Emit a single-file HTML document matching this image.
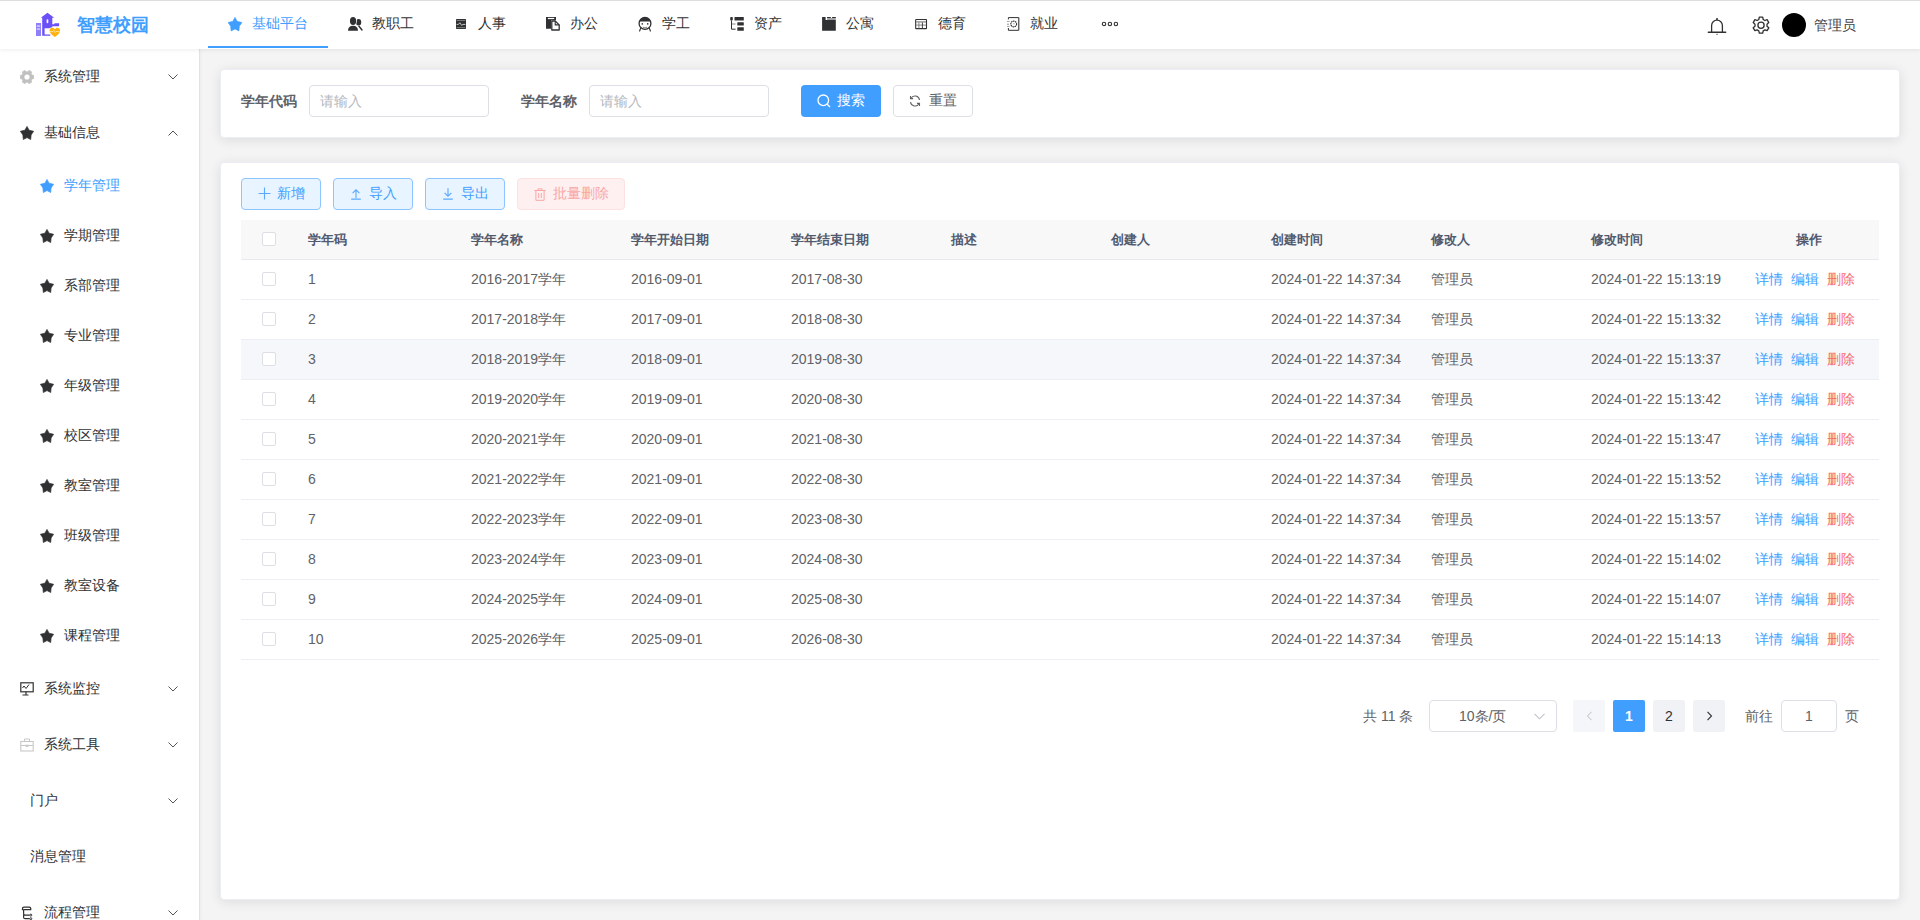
<!DOCTYPE html>
<html><head><meta charset="utf-8">
<style>
*{box-sizing:border-box;margin:0;padding:0}
html,body{width:1920px;height:920px;overflow:hidden}
body{font-family:"Liberation Sans",sans-serif;font-size:14px;color:#606266;background:#f4f4f4;position:relative}
.abs{position:absolute}
/* header */
#hdr{position:absolute;left:0;top:0;width:1920px;height:49px;background:#fff;border-top:1px solid #dcdedb;box-shadow:0 1px 4px rgba(0,21,41,.08);z-index:5}
.logo-t{position:absolute;left:77px;top:13px;font-size:18px;font-weight:bold;color:#409eff;letter-spacing:0px;line-height:22px}
.nav{position:absolute;left:208px;top:-1px;height:48px;display:flex}
.nav .it{height:48px;padding:0 20px;display:flex;align-items:center;color:#303133;font-size:14px;position:relative}
.nav .it svg{width:16px;height:16px;margin-right:8px;flex:none}
.nav .it.on{color:#409eff}
.nav .it.on:after{content:"";position:absolute;left:0;right:0;bottom:0;height:2px;background:#409eff}
/* sidebar */
#side{position:absolute;left:0;top:49px;width:200px;height:871px;background:#fff;border-right:1px solid #dfe2e8;box-shadow:1px 0 3px rgba(0,0,0,.04)}
.mi{position:absolute;left:0;width:199px;height:56px;display:flex;align-items:center;color:#303133;font-size:14px}
.mi svg.ic{position:absolute;left:20px;width:14px;height:14px}
.mi .tx{position:absolute;left:44px}
.mi svg.ch{position:absolute;left:168px;width:10px;height:6px}
.sm{position:absolute;left:0;width:199px;height:50px;display:flex;align-items:center;color:#303133}
.sm svg{position:absolute;left:40px;width:14px;height:14px}
.sm .tx{position:absolute;left:64px}
/* cards */
.card{position:absolute;left:220px;width:1680px;background:#fff;border:1px solid #ebeef5;border-radius:4px;box-shadow:0 2px 12px 0 rgba(0,0,0,.1)}
.lbl{position:absolute;top:92px;font-weight:bold;color:#606266;font-size:14px;line-height:18px}
.inp{position:absolute;top:85px;width:180px;height:32px;border:1px solid #dcdfe6;border-radius:4px;background:#fff;color:#b4b7be;padding-left:10px;line-height:30px;font-size:14px}
.btn{position:absolute;height:32px;border-radius:4px;display:flex;align-items:center;justify-content:center;font-size:14px}

.tb{position:absolute;left:241px;width:1638px}
.th{position:absolute;top:220px;left:241px;width:1638px;height:40px;background:#f8f8f9;border-bottom:1px solid #e6eaf0}
.tr{position:absolute;left:241px;width:1638px;height:40px;border-bottom:1px solid #ebeef5;background:#fff}
.tr.hv{background:#f5f7fa}
.c{position:absolute;top:0;height:39px;line-height:39px;white-space:nowrap}
.th .c{font-weight:bold;color:#515a6e;font-size:13px}
.tr .c{color:#606266;font-size:14px}
.cb{position:absolute;left:21px;top:12px;width:14px;height:14px;border:1px solid #dcdfe6;border-radius:2px;background:#fff}
.op{color:#409eff}
.op.d{color:#f56c6c}
.pb{position:absolute;top:700px;width:32px;height:32px;border-radius:2px;background:#f0f2f5;color:#303133;text-align:center;line-height:32px;font-size:14px}
</style></head>
<body>
<div id="hdr">
  <svg class="abs" style="left:30px;top:5px" width="40" height="40" viewBox="0 0 40 40">
    <rect x="6" y="17" width="5" height="13" fill="#8e80f8"/>
    <rect x="6.8" y="19.6" width="3.4" height=".9" fill="#fff"/><rect x="6.8" y="22.6" width="3.4" height=".9" fill="#fff"/>
    <path d="M10.8 11.8 L17.5 6.8 L24.2 11.8 L22.3 11.8 L22.3 18.3 L24.4 18.3 L24.4 17.3 L29.1 17.3 L29.1 20.3 L22.3 20.3 L22.3 22.3 L14.6 22.3 L14.6 28.4 L20.3 28.4 L20.3 29.8 L12.2 29.8 L12.2 11.8 Z" fill="#6a50f6"/>
    <rect x="16.6" y="13.2" width="1.7" height="4.1" rx=".8" fill="#fff"/>
    <path d="M24.85 31.6 C21.6 29 19.1 27.1 19.1 24.3 C19.1 22.4 20.5 21.2 22.3 21.2 C23.4 21.2 24.3 21.8 24.85 22.6 C25.4 21.8 26.3 21.2 27.4 21.2 C29.2 21.2 30.6 22.4 30.6 24.3 C30.6 27.1 28.1 29 24.85 31.6Z" fill="#fff"/>
    <path d="M24.85 31.1 C22 28.8 19.6 27 19.6 24.4 C19.6 22.8 20.8 21.7 22.3 21.7 C23.4 21.7 24.3 22.3 24.85 23.2 C25.4 22.3 26.3 21.7 27.4 21.7 C28.9 21.7 30.1 22.8 30.1 24.4 C30.1 27 27.7 28.8 24.85 31.1Z" fill="#ffb20a"/>
    <path d="M20 25.6 H23 L23.8 24.4 L25 26.6 L25.8 25.6 H29.6" fill="none" stroke="#fff" stroke-width=".55"/>
  </svg>
  <div class="logo-t">智慧校园</div>
  <div class="nav">
    <div class="it on"><svg viewBox="0 0 16 16"><path d="M7 1.4 L9.2 5.4 L13.9 6.5 L11.3 10.2 L10.9 14.9 L7 12.9 L3.1 14.9 L2.7 10.2 L.1 6.5 L4.8 5.4Z" fill="#409eff" stroke="#409eff" stroke-width=".7" stroke-linejoin="round"/></svg>基础平台</div>
    <div class="it"><svg viewBox="0 0 16 16"><ellipse cx="10.6" cy="6.2" rx="2.6" ry="3.2" fill="#303133"/><path d="M11 10.2 L14 14" stroke="#303133" stroke-width="1.4" stroke-linecap="round"/><ellipse cx="5.05" cy="5" rx="3.9" ry="4.8" fill="#fff"/><path d="M-1 15.8 C-1 11 2 8.8 5 8.8 C8 8.8 11 11 11 15.8Z" fill="#fff"/><ellipse cx="5.05" cy="5" rx="3.1" ry="4" fill="#303133"/><path d="M0 14.7 C0 11.5 2 9.8 5 9.8 C8 9.8 10 11.5 10 14.7 Z" fill="#303133"/></svg>教职工</div>
    <div class="it"><svg viewBox="0 0 16 16"><rect x="2" y="2.9" width="10" height="10" rx=".6" fill="#303133"/><path d="M2.6 4.5h8.8M2.6 11.6h8.8" stroke="#9a9a9a" stroke-width=".7"/><path d="M2.6 8.4h1.8l1.5-1.6 1.8 2.6 1.2-1h2.5" stroke="#d8d8d8" stroke-width=".9" fill="none"/></svg>人事</div>
    <div class="it"><svg viewBox="0 0 16 16"><path d="M0 1 H10 V4.3 H5.1 V12.8 H0Z" fill="#303133"/><rect x="1.9" y="1.9" width="6.3" height="1.2" fill="#fff"/><path d="M5.8 5 H9.2 L13.2 8.9 V14 H5.8Z" fill="#fff" stroke="#303133" stroke-width="1.3" stroke-linejoin="round"/><path d="M9.2 5 V8.9 H13.2" fill="none" stroke="#303133" stroke-width="1.1"/></svg>办公</div>
    <div class="it"><svg viewBox="0 -.6 16 16"><circle cx="7" cy="6.8" r="5.9" fill="none" stroke="#303133" stroke-width="1.3"/><path d="M1.4 4.8 C2.4 2 4.5 .9 7 .9 S11.6 2 12.6 4.8Z" fill="#303133"/><circle cx="4.3" cy="7.3" r=".8" fill="#303133"/><circle cx="9.7" cy="7.3" r=".8" fill="#303133"/><path d="M4.8 9.8 C6 10.8 8 10.8 9.2 9.8 L8.6 12 H5.4Z" fill="#8a8a8a"/><path d="M2.6 11.8 L1.6 14.4 M11.4 11.8 L12.4 14.4" stroke="#303133" stroke-width="1.2" stroke-linecap="round"/></svg>学工</div>
    <div class="it"><svg viewBox="0 0 16 16"><rect x=".2" y="1" width="2.6" height="3.5" rx=".8" fill="#303133"/><path d="M1.5 4.5 V13.2 H5.6" fill="none" stroke="#303133" stroke-width="1"/><path d="M2 8 H5.6" stroke="#888" stroke-width="1"/><rect x="4.5" y="1" width="9.3" height="3.5" rx=".5" fill="#303133"/><rect x="7.3" y="6.3" width="6.5" height="3.2" rx=".5" fill="#303133"/><rect x="7.3" y="11.3" width="6.5" height="3.4" rx=".5" fill="#303133"/></svg>资产</div>
    <div class="it"><svg viewBox="0 0 16 16"><path d="M.1 1 H3.6 V4.1 H13.8 V14.7 H.1Z" fill="#303133"/><rect x="5.1" y="1" width="3.7" height="1" fill="#303133"/><rect x="10.1" y="1" width="3.7" height="1" fill="#303133"/><rect x="5.1" y="2" width="8.7" height="2.1" fill="#303133" opacity=".45"/></svg>公寓</div>
    <div class="it"><svg viewBox="0 0 16 16"><rect x="1.7" y="3.5" width="10.8" height="9.1" rx=".4" fill="none" stroke="#303133" stroke-width="1.1"/><path d="M2.2 5.9 H12" stroke="#888" stroke-width="1.3"/><path d="M2.2 9.1 H12 M4.9 6.5 V12.2" stroke="#777" stroke-width=".9"/><path d="M8.4 6.5 V12.2" stroke="#303133" stroke-width=".9"/></svg>德育</div>
    <div class="it"><svg viewBox="0 0 16 16"><path d="M2.4 3.4 V1.6 H12.7 V14.3 H2.4 V12" fill="none" stroke="#303133" stroke-width="1"/><path d="M12.7 1.6 V14.3" stroke="#666" stroke-width="1.1"/><path d="M1 5.4 H3.6 M1 10.4 H3.6" stroke="#888" stroke-width=".8"/><rect x="1.2" y="7.6" width="1.6" height="1.3" fill="#999"/><circle cx="7.7" cy="8" r="2.9" fill="none" stroke="#303133" stroke-width="1.1" stroke-dasharray="1.6 .5"/><path d="M7.5 6.8 L8.8 8 L7.5 8.6Z" fill="#888"/></svg>就业</div>
    <div class="it"><svg viewBox="0 0 24 16" style="margin:0;width:24px"><circle cx="6" cy="8" r="1.7" fill="none" stroke="#303133" stroke-width="1.1"/><circle cx="11.9" cy="8" r="1.7" fill="none" stroke="#303133" stroke-width="1.1"/><circle cx="17.9" cy="8" r="1.7" fill="none" stroke="#303133" stroke-width="1.1"/></svg></div>
  </div>
  <svg class="abs" style="left:1707px;top:15px" width="20" height="20" viewBox="0 0 20 20"><path d="M4.6 16.2V9.6a5.4 5.4 0 0 1 10.8 0v6.6" fill="none" stroke="#303133" stroke-width="1.3"/><path d="M1.3 16.3h17.4" stroke="#303133" stroke-width="1.4" stroke-linecap="round"/><circle cx="10" cy="2.9" r="1" fill="#303133"/><path d="M9.2 18.3h1.6" stroke="#888" stroke-width="1.2"/></svg>
  <svg class="abs" style="left:1751px;top:14px" width="20" height="20" viewBox="0 0 20 20"><path d="M8.3 2.2h3.4l.5 2.3 1.7 1 2.2-.8 1.7 2.9-1.8 1.6v2l1.8 1.6-1.7 2.9-2.2-.8-1.7 1-.5 2.3H8.3l-.5-2.3-1.7-1-2.2.8-1.7-2.9 1.8-1.6V9.2L2.2 7.6l1.7-2.9 2.2.8 1.7-1z" fill="none" stroke="#303133" stroke-width="1.3" stroke-linejoin="round"/><circle cx="10" cy="10.2" r="3.1" fill="none" stroke="#303133" stroke-width="1.3"/></svg>
  <div class="abs" style="left:1782px;top:12px;width:24px;height:24px;border-radius:50%;background:#000"></div>
  <div class="abs" style="left:1814px;top:16px;font-size:14px;color:#444;line-height:16px">管理员</div>
</div>

<div id="side">
<div class="mi" style="top:0"><svg class="ic" viewBox="0 0 14 14"><path d="M12.01 4.98 L13.82 5.43 L13.82 8.57 L12.01 9.02 L11.26 10.32 L11.77 12.12 L9.05 13.69 L7.75 12.35 L6.25 12.35 L4.95 13.69 L2.23 12.12 L2.74 10.32 L1.99 9.02 L0.18 8.57 L0.18 5.43 L1.99 4.98 L2.74 3.68 L2.23 1.88 L4.95 0.31 L6.25 1.65 L7.75 1.65 L9.05 0.31 L11.77 1.88 L11.26 3.68Z" fill="#c0c0c0" stroke="#c0c0c0" stroke-width=".6" stroke-linejoin="round"/><circle cx="7" cy="7" r="2.6" fill="#fff"/></svg><span class="tx">系统管理</span><svg class="ch" viewBox="0 0 10 6"><path d="M.5 .5L5 5 9.5 .5" fill="none" stroke="#505256" stroke-width="1"/></svg></div>
<div class="mi" style="top:56px"><svg class="ic" viewBox="0 0 14 14"><path d="M7 0.4 L9.1 4.2 L13.6 5.3 L11.1 8.9 L10.7 13.5 L7 11.6 L3.3 13.5 L2.9 8.9 L0.4 5.3 L4.9 4.2Z" fill="#303133" stroke="#303133" stroke-width=".7" stroke-linejoin="round"/></svg><span class="tx">基础信息</span><svg class="ch" viewBox="0 0 10 6"><path d="M.5 5.5L5 1 9.5 5.5" fill="none" stroke="#505256" stroke-width="1"/></svg></div>
<div class="sm" style="top:112px;color:#409eff"><svg  viewBox="0 0 14 14"><path d="M7 0.4 L9.1 4.2 L13.6 5.3 L11.1 8.9 L10.7 13.5 L7 11.6 L3.3 13.5 L2.9 8.9 L0.4 5.3 L4.9 4.2Z" fill="#409eff" stroke="#409eff" stroke-width=".7" stroke-linejoin="round"/></svg><span class="tx">学年管理</span></div>
<div class="sm" style="top:162px;color:#303133"><svg  viewBox="0 0 14 14"><path d="M7 0.4 L9.1 4.2 L13.6 5.3 L11.1 8.9 L10.7 13.5 L7 11.6 L3.3 13.5 L2.9 8.9 L0.4 5.3 L4.9 4.2Z" fill="#303133" stroke="#303133" stroke-width=".7" stroke-linejoin="round"/></svg><span class="tx">学期管理</span></div>
<div class="sm" style="top:212px;color:#303133"><svg  viewBox="0 0 14 14"><path d="M7 0.4 L9.1 4.2 L13.6 5.3 L11.1 8.9 L10.7 13.5 L7 11.6 L3.3 13.5 L2.9 8.9 L0.4 5.3 L4.9 4.2Z" fill="#303133" stroke="#303133" stroke-width=".7" stroke-linejoin="round"/></svg><span class="tx">系部管理</span></div>
<div class="sm" style="top:262px;color:#303133"><svg  viewBox="0 0 14 14"><path d="M7 0.4 L9.1 4.2 L13.6 5.3 L11.1 8.9 L10.7 13.5 L7 11.6 L3.3 13.5 L2.9 8.9 L0.4 5.3 L4.9 4.2Z" fill="#303133" stroke="#303133" stroke-width=".7" stroke-linejoin="round"/></svg><span class="tx">专业管理</span></div>
<div class="sm" style="top:312px;color:#303133"><svg  viewBox="0 0 14 14"><path d="M7 0.4 L9.1 4.2 L13.6 5.3 L11.1 8.9 L10.7 13.5 L7 11.6 L3.3 13.5 L2.9 8.9 L0.4 5.3 L4.9 4.2Z" fill="#303133" stroke="#303133" stroke-width=".7" stroke-linejoin="round"/></svg><span class="tx">年级管理</span></div>
<div class="sm" style="top:362px;color:#303133"><svg  viewBox="0 0 14 14"><path d="M7 0.4 L9.1 4.2 L13.6 5.3 L11.1 8.9 L10.7 13.5 L7 11.6 L3.3 13.5 L2.9 8.9 L0.4 5.3 L4.9 4.2Z" fill="#303133" stroke="#303133" stroke-width=".7" stroke-linejoin="round"/></svg><span class="tx">校区管理</span></div>
<div class="sm" style="top:412px;color:#303133"><svg  viewBox="0 0 14 14"><path d="M7 0.4 L9.1 4.2 L13.6 5.3 L11.1 8.9 L10.7 13.5 L7 11.6 L3.3 13.5 L2.9 8.9 L0.4 5.3 L4.9 4.2Z" fill="#303133" stroke="#303133" stroke-width=".7" stroke-linejoin="round"/></svg><span class="tx">教室管理</span></div>
<div class="sm" style="top:462px;color:#303133"><svg  viewBox="0 0 14 14"><path d="M7 0.4 L9.1 4.2 L13.6 5.3 L11.1 8.9 L10.7 13.5 L7 11.6 L3.3 13.5 L2.9 8.9 L0.4 5.3 L4.9 4.2Z" fill="#303133" stroke="#303133" stroke-width=".7" stroke-linejoin="round"/></svg><span class="tx">班级管理</span></div>
<div class="sm" style="top:512px;color:#303133"><svg  viewBox="0 0 14 14"><path d="M7 0.4 L9.1 4.2 L13.6 5.3 L11.1 8.9 L10.7 13.5 L7 11.6 L3.3 13.5 L2.9 8.9 L0.4 5.3 L4.9 4.2Z" fill="#303133" stroke="#303133" stroke-width=".7" stroke-linejoin="round"/></svg><span class="tx">教室设备</span></div>
<div class="sm" style="top:562px;color:#303133"><svg  viewBox="0 0 14 14"><path d="M7 0.4 L9.1 4.2 L13.6 5.3 L11.1 8.9 L10.7 13.5 L7 11.6 L3.3 13.5 L2.9 8.9 L0.4 5.3 L4.9 4.2Z" fill="#303133" stroke="#303133" stroke-width=".7" stroke-linejoin="round"/></svg><span class="tx">课程管理</span></div>
<div class="mi" style="top:612px"><svg class="ic" viewBox="0 0 14 14"><rect x=".8" y=".8" width="12.4" height="9" fill="none" stroke="#303133" stroke-width="1.2"/><path d="M2.5 6l1.5-2 2 2.5 3-4" fill="none" stroke="#303133" stroke-width="1"/><path d="M6 9.8v3M2.5 13h6" stroke="#303133" stroke-width="1.2"/></svg><span class="tx">系统监控</span><svg class="ch" viewBox="0 0 10 6"><path d="M.5 .5L5 5 9.5 .5" fill="none" stroke="#505256" stroke-width="1"/></svg></div>
<div class="mi" style="top:668px"><svg class="ic" viewBox="0 0 14 14"><rect x=".8" y="3.5" width="12.4" height="9.5" fill="none" stroke="#c8c8c8" stroke-width="1.1"/><path d="M4.5 3.5V1h5v2.5M.8 7.5h12.4M6 6.5v2h2v-2" fill="none" stroke="#c8c8c8" stroke-width="1"/></svg><span class="tx">系统工具</span><svg class="ch" viewBox="0 0 10 6"><path d="M.5 .5L5 5 9.5 .5" fill="none" stroke="#505256" stroke-width="1"/></svg></div>
<div class="mi" style="top:724px"><span class="tx" style="left:30px">门户</span><svg class="ch" viewBox="0 0 10 6"><path d="M.5 .5L5 5 9.5 .5" fill="none" stroke="#505256" stroke-width="1"/></svg></div>
<div class="mi" style="top:780px"><span class="tx" style="left:30px">消息管理</span></div>
<div class="mi" style="top:836px"><svg class="ic" viewBox="0 0 14 14" style="left:21px"><path d="M1.5 4.2 V2.6 C1.5 1.7 2.1 1.1 3 1.1 H8.2 C9.1 1.1 9.7 1.7 9.7 2.6 V3.6 H2.3" fill="none" stroke="#303133" stroke-width="1.3"/><path d="M2.6 4 V7.6 C2.6 8.5 3.2 9.1 4.1 9.1 H8.6 M2.6 8.6 V11.2 C2.6 12.1 3.2 12.7 4.1 12.7 H8.6" fill="none" stroke="#303133" stroke-width="1.2"/><circle cx="9.8" cy="9.1" r="1" fill="none" stroke="#303133" stroke-width="1"/><circle cx="9.8" cy="12.7" r="1" fill="none" stroke="#303133" stroke-width="1"/></svg><span class="tx">流程管理</span><svg class="ch" viewBox="0 0 10 6"><path d="M.5 .5L5 5 9.5 .5" fill="none" stroke="#505256" stroke-width="1"/></svg></div>
</div>
<div class="card" style="top:69px;height:69px"></div>
<div class="lbl" style="left:241px">学年代码</div>
<div class="inp" style="left:309px">请输入</div>
<div class="lbl" style="left:521px">学年名称</div>
<div class="inp" style="left:589px">请输入</div>
<div class="btn" style="left:801px;top:85px;width:80px;background:#409eff;color:#fff"><svg width="14" height="14" viewBox="0 0 14 14" style="margin-right:6px"><circle cx="6.3" cy="6.3" r="5.3" fill="none" stroke="#fff" stroke-width="1.3"/><path d="M10.2 10.2L13 13" stroke="#fff" stroke-width="1.3"/></svg>搜索</div>
<div class="btn" style="left:893px;top:85px;width:80px;background:#fff;border:1px solid #dcdfe6;color:#606266"><svg width="12" height="12" viewBox="0 0 12 12" style="margin-right:8px"><path d="M10.5 5A4.6 4.6 0 0 0 2 3.2M1.5 7A4.6 4.6 0 0 0 10 8.8" fill="none" stroke="#606266" stroke-width="1.1"/><path d="M1.5 1v2.6h2.6M10.5 11V8.4H7.9" fill="none" stroke="#606266" stroke-width="1.1"/></svg>重置</div>
<div class="card" style="top:162px;height:738px"></div>
<div class="btn" style="left:241px;top:178px;width:80px;background:#e8f4ff;border:1px solid #8cc5ff;color:#409eff"><svg width="13" height="13" viewBox="0 0 13 13" style="margin-right:6px;position:relative;top:-.5px"><path d="M6.5 .6v11.8M.6 6.5h11.8" stroke="#5aa9ff" stroke-width="1.1"/></svg>新增</div>
<div class="btn" style="left:333px;top:178px;width:80px;background:#e8f4ff;border:1px solid #8cc5ff;color:#409eff"><svg width="12" height="13" viewBox="0 0 12 13" style="margin-right:7px;position:relative;top:-1px"><path d="M6 11V3M2.6 6.2L6 2.8l3.4 3.4M1.2 12.1h9.6" fill="none" stroke="#5aa9ff" stroke-width="1.1"/></svg>导入</div>
<div class="btn" style="left:425px;top:178px;width:80px;background:#e8f4ff;border:1px solid #8cc5ff;color:#409eff"><svg width="12" height="13" viewBox="0 0 12 13" style="margin-right:7px;position:relative;top:-1px"><path d="M6 1.2v8M2.6 5.8L6 9.2l3.4-3.4M1.2 12.1h9.6" fill="none" stroke="#5aa9ff" stroke-width="1.1"/></svg>导出</div>
<div class="btn" style="left:517px;top:178px;width:108px;background:#fef0f0;border:1px solid #fde2e2;color:#f9a7a7"><svg width="12" height="13" viewBox="0 0 12 13" style="margin-right:7px"><path d="M.3 2.5h11.4M4 2.5V.8h4v1.7M1.9 2.5v9.8h8.2V2.5M4.7 5v5M7.3 5v5" fill="none" stroke="#f9a7a7" stroke-width="1"/></svg>批量删除</div>
<div class="th"><div class="cb"></div><div class="c" style="left:67px">学年码</div><div class="c" style="left:230px">学年名称</div><div class="c" style="left:390px">学年开始日期</div><div class="c" style="left:550px">学年结束日期</div><div class="c" style="left:710px">描述</div><div class="c" style="left:870px">创建人</div><div class="c" style="left:1030px">创建时间</div><div class="c" style="left:1190px">修改人</div><div class="c" style="left:1350px">修改时间</div><div class="c" style="left:1555px">操作</div></div>
<div class="tr" style="top:260px"><div class="cb"></div><div class="c" style="left:67px">1</div><div class="c" style="left:230px">2016-2017学年</div><div class="c" style="left:390px">2016-09-01</div><div class="c" style="left:550px">2017-08-30</div><div class="c" style="left:1030px">2024-01-22 14:37:34</div><div class="c" style="left:1190px">管理员</div><div class="c" style="left:1350px">2024-01-22 15:13:19</div><div class="c" style="left:1514px"><span class="op">详情</span>&nbsp;&nbsp;<span class="op">编辑</span>&nbsp;&nbsp;<span class="op d">删除</span></div></div>
<div class="tr" style="top:300px"><div class="cb"></div><div class="c" style="left:67px">2</div><div class="c" style="left:230px">2017-2018学年</div><div class="c" style="left:390px">2017-09-01</div><div class="c" style="left:550px">2018-08-30</div><div class="c" style="left:1030px">2024-01-22 14:37:34</div><div class="c" style="left:1190px">管理员</div><div class="c" style="left:1350px">2024-01-22 15:13:32</div><div class="c" style="left:1514px"><span class="op">详情</span>&nbsp;&nbsp;<span class="op">编辑</span>&nbsp;&nbsp;<span class="op d">删除</span></div></div>
<div class="tr hv" style="top:340px"><div class="cb"></div><div class="c" style="left:67px">3</div><div class="c" style="left:230px">2018-2019学年</div><div class="c" style="left:390px">2018-09-01</div><div class="c" style="left:550px">2019-08-30</div><div class="c" style="left:1030px">2024-01-22 14:37:34</div><div class="c" style="left:1190px">管理员</div><div class="c" style="left:1350px">2024-01-22 15:13:37</div><div class="c" style="left:1514px"><span class="op">详情</span>&nbsp;&nbsp;<span class="op">编辑</span>&nbsp;&nbsp;<span class="op d">删除</span></div></div>
<div class="tr" style="top:380px"><div class="cb"></div><div class="c" style="left:67px">4</div><div class="c" style="left:230px">2019-2020学年</div><div class="c" style="left:390px">2019-09-01</div><div class="c" style="left:550px">2020-08-30</div><div class="c" style="left:1030px">2024-01-22 14:37:34</div><div class="c" style="left:1190px">管理员</div><div class="c" style="left:1350px">2024-01-22 15:13:42</div><div class="c" style="left:1514px"><span class="op">详情</span>&nbsp;&nbsp;<span class="op">编辑</span>&nbsp;&nbsp;<span class="op d">删除</span></div></div>
<div class="tr" style="top:420px"><div class="cb"></div><div class="c" style="left:67px">5</div><div class="c" style="left:230px">2020-2021学年</div><div class="c" style="left:390px">2020-09-01</div><div class="c" style="left:550px">2021-08-30</div><div class="c" style="left:1030px">2024-01-22 14:37:34</div><div class="c" style="left:1190px">管理员</div><div class="c" style="left:1350px">2024-01-22 15:13:47</div><div class="c" style="left:1514px"><span class="op">详情</span>&nbsp;&nbsp;<span class="op">编辑</span>&nbsp;&nbsp;<span class="op d">删除</span></div></div>
<div class="tr" style="top:460px"><div class="cb"></div><div class="c" style="left:67px">6</div><div class="c" style="left:230px">2021-2022学年</div><div class="c" style="left:390px">2021-09-01</div><div class="c" style="left:550px">2022-08-30</div><div class="c" style="left:1030px">2024-01-22 14:37:34</div><div class="c" style="left:1190px">管理员</div><div class="c" style="left:1350px">2024-01-22 15:13:52</div><div class="c" style="left:1514px"><span class="op">详情</span>&nbsp;&nbsp;<span class="op">编辑</span>&nbsp;&nbsp;<span class="op d">删除</span></div></div>
<div class="tr" style="top:500px"><div class="cb"></div><div class="c" style="left:67px">7</div><div class="c" style="left:230px">2022-2023学年</div><div class="c" style="left:390px">2022-09-01</div><div class="c" style="left:550px">2023-08-30</div><div class="c" style="left:1030px">2024-01-22 14:37:34</div><div class="c" style="left:1190px">管理员</div><div class="c" style="left:1350px">2024-01-22 15:13:57</div><div class="c" style="left:1514px"><span class="op">详情</span>&nbsp;&nbsp;<span class="op">编辑</span>&nbsp;&nbsp;<span class="op d">删除</span></div></div>
<div class="tr" style="top:540px"><div class="cb"></div><div class="c" style="left:67px">8</div><div class="c" style="left:230px">2023-2024学年</div><div class="c" style="left:390px">2023-09-01</div><div class="c" style="left:550px">2024-08-30</div><div class="c" style="left:1030px">2024-01-22 14:37:34</div><div class="c" style="left:1190px">管理员</div><div class="c" style="left:1350px">2024-01-22 15:14:02</div><div class="c" style="left:1514px"><span class="op">详情</span>&nbsp;&nbsp;<span class="op">编辑</span>&nbsp;&nbsp;<span class="op d">删除</span></div></div>
<div class="tr" style="top:580px"><div class="cb"></div><div class="c" style="left:67px">9</div><div class="c" style="left:230px">2024-2025学年</div><div class="c" style="left:390px">2024-09-01</div><div class="c" style="left:550px">2025-08-30</div><div class="c" style="left:1030px">2024-01-22 14:37:34</div><div class="c" style="left:1190px">管理员</div><div class="c" style="left:1350px">2024-01-22 15:14:07</div><div class="c" style="left:1514px"><span class="op">详情</span>&nbsp;&nbsp;<span class="op">编辑</span>&nbsp;&nbsp;<span class="op d">删除</span></div></div>
<div class="tr" style="top:620px"><div class="cb"></div><div class="c" style="left:67px">10</div><div class="c" style="left:230px">2025-2026学年</div><div class="c" style="left:390px">2025-09-01</div><div class="c" style="left:550px">2026-08-30</div><div class="c" style="left:1030px">2024-01-22 14:37:34</div><div class="c" style="left:1190px">管理员</div><div class="c" style="left:1350px">2024-01-22 15:14:13</div><div class="c" style="left:1514px"><span class="op">详情</span>&nbsp;&nbsp;<span class="op">编辑</span>&nbsp;&nbsp;<span class="op d">删除</span></div></div>
<div class="abs" style="left:1363px;top:708px;line-height:16px;color:#606266">共 11 条</div>
<div class="abs" style="left:1429px;top:700px;width:128px;height:32px;border:1px solid #dcdfe6;border-radius:4px;background:#fff"></div>
<div class="abs" style="left:1459px;top:708px;line-height:16px;color:#606266">10条/页</div>
<svg class="abs" style="left:1534px;top:713px" width="11" height="7" viewBox="0 0 11 7"><path d="M.5 .8L5.5 5.8 10.5 .8" fill="none" stroke="#c0c4cc" stroke-width="1.1"/></svg>
<div class="pb" style="left:1573px;background:#f5f6f9"><svg width="7" height="10" viewBox="0 0 7 10" style="margin-top:11px"><path d="M5.5 .8L1.5 5 5.5 9.2" fill="none" stroke="#b8bcc4" stroke-width="1"/></svg></div>
<div class="pb" style="left:1613px;background:#409eff;color:#fff;font-weight:bold">1</div>
<div class="pb" style="left:1653px">2</div>
<div class="pb" style="left:1693px"><svg width="7" height="10" viewBox="0 0 7 10" style="margin-top:11px"><path d="M1.5 .8L5.5 5 1.5 9.2" fill="none" stroke="#303133" stroke-width="1.1"/></svg></div>
<div class="abs" style="left:1745px;top:708px;line-height:16px;color:#606266">前往</div>
<div class="abs" style="left:1781px;top:700px;width:56px;height:32px;border:1px solid #dcdfe6;border-radius:4px;background:#fff;text-align:center;line-height:30px;color:#606266">1</div>
<div class="abs" style="left:1845px;top:708px;line-height:16px;color:#606266">页</div>
</body></html>
